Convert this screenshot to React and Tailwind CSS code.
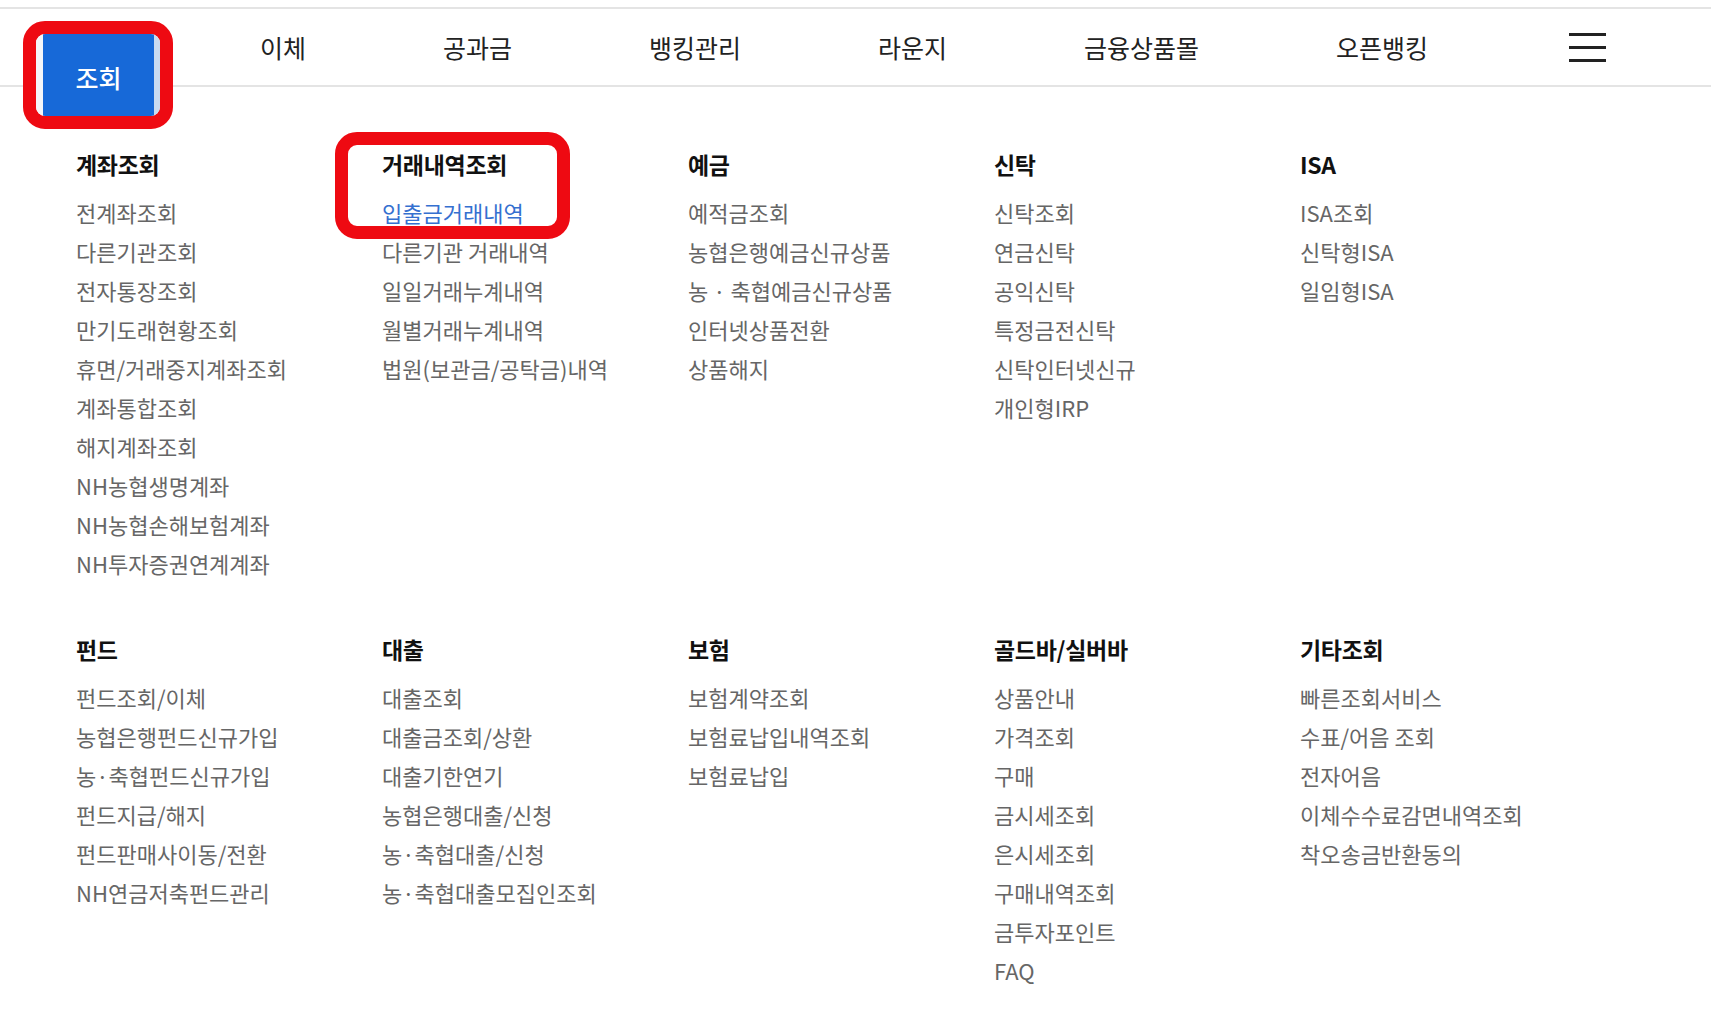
import React from "react";

const sections1 = [
  { title: "계좌조회", items: ["전계좌조회", "다른기관조회", "전자통장조회", "만기도래현황조회", "휴면/거래중지계좌조회", "계좌통합조회", "해지계좌조회", "NH농협생명계좌", "NH농협손해보험계좌", "NH투자증권연계계좌"] },
  { title: "거래내역조회", items: ["입출금거래내역", "다른기관 거래내역", "일일거래누계내역", "월별거래누계내역", "법원(보관금/공탁금)내역"], highlight: true },
  { title: "예금", items: ["예적금조회", "농협은행예금신규상품", "농 · 축협예금신규상품", "인터넷상품전환", "상품해지"] },
  { title: "신탁", items: ["신탁조회", "연금신탁", "공익신탁", "특정금전신탁", "신탁인터넷신규", "개인형IRP"] },
  { title: "ISA", items: ["ISA조회", "신탁형ISA", "일임형ISA"] },
];

const sections2 = [
  { title: "펀드", items: ["펀드조회/이체", "농협은행펀드신규가입", "농·축협펀드신규가입", "펀드지급/해지", "펀드판매사이동/전환", "NH연금저축펀드관리"] },
  { title: "대출", items: ["대출조회", "대출금조회/상환", "대출기한연기", "농협은행대출/신청", "농·축협대출/신청", "농·축협대출모집인조회"] },
  { title: "보험", items: ["보험계약조회", "보험료납입내역조회", "보험료납입"] },
  { title: "골드바/실버바", items: ["상품안내", "가격조회", "구매", "금시세조회", "은시세조회", "구매내역조회", "금투자포인트", "FAQ"] },
  { title: "기타조회", items: ["빠른조회서비스", "수표/어음 조회", "전자어음", "이체수수료감면내역조회", "착오송금반환동의"] },
];

function Column({ s }) {
  return (
    <div className="relative">
      {s.highlight && (
        <div className="absolute left-[-47px] top-[-17px] w-[235px] h-[107px] border-[13px] border-[#ee0a12] rounded-[22px] pointer-events-none" />
      )}
      <div className="relative text-[23px] font-bold leading-[30px] text-[#111] tracking-[-0.3px]">{s.title}</div>
      <ul className="relative mt-[14px]">
        {s.items.map((it, i) => (
          <li
            key={it}
            className={
              "text-[22px] leading-[39px] whitespace-nowrap " +
              (s.highlight && i === 0 ? "text-[#3570d0]" : "text-[#666]")
            }
          >
            {it}
          </li>
        ))}
      </ul>
    </div>
  );
}

export default function App() {
  const navItems = ["이체", "공과금", "뱅킹관리", "라운지", "금융상품몰", "오픈뱅킹"];
  return (
    <div
      className="w-[1711px] h-[1014px] bg-white overflow-hidden"
      style={{ fontFamily: '"Noto Sans CJK KR", "Noto Sans", sans-serif' }}
    >
      <div className="h-[7px]" />
      <nav className="h-[80px] border-t-2 border-b-2 border-[#e4e4e4] flex items-center">
        <div className="self-start ml-[23px] mt-[12px] w-[150px] h-[108px] shrink-0 border-[13px] border-[#ee0a12] rounded-[22px] flex overflow-hidden relative z-10 bg-white">
          <div className="w-[7px] bg-[#f4f6f9]" />
          <div className="flex-1 bg-[#1769d8] flex items-center justify-center pt-[6px] text-white text-[25px] font-medium">
            조회
          </div>
          <div className="w-[6px] bg-[#c9dbf1]" />
        </div>
        <div className="flex items-center gap-[137px] ml-[87px]">
          {navItems.map((n) => (
            <span key={n} className="text-[25px] text-[#222] leading-none whitespace-nowrap">
              {n}
            </span>
          ))}
          <div className="ml-[4px] w-[37px] flex flex-col gap-[10px]">
            <div className="h-[3px] bg-[#222]" />
            <div className="h-[3px] bg-[#222]" />
            <div className="h-[3px] bg-[#222]" />
          </div>
        </div>
      </nav>
      <div className="pt-[62px] pl-[76px]">
        <div className="grid grid-cols-[repeat(5,306px)]">
          {sections1.map((s) => (
            <Column key={s.title} s={s} />
          ))}
        </div>
        <div className="grid grid-cols-[repeat(5,306px)] mt-[51px]">
          {sections2.map((s) => (
            <Column key={s.title} s={s} />
          ))}
        </div>
      </div>
    </div>
  );
}
